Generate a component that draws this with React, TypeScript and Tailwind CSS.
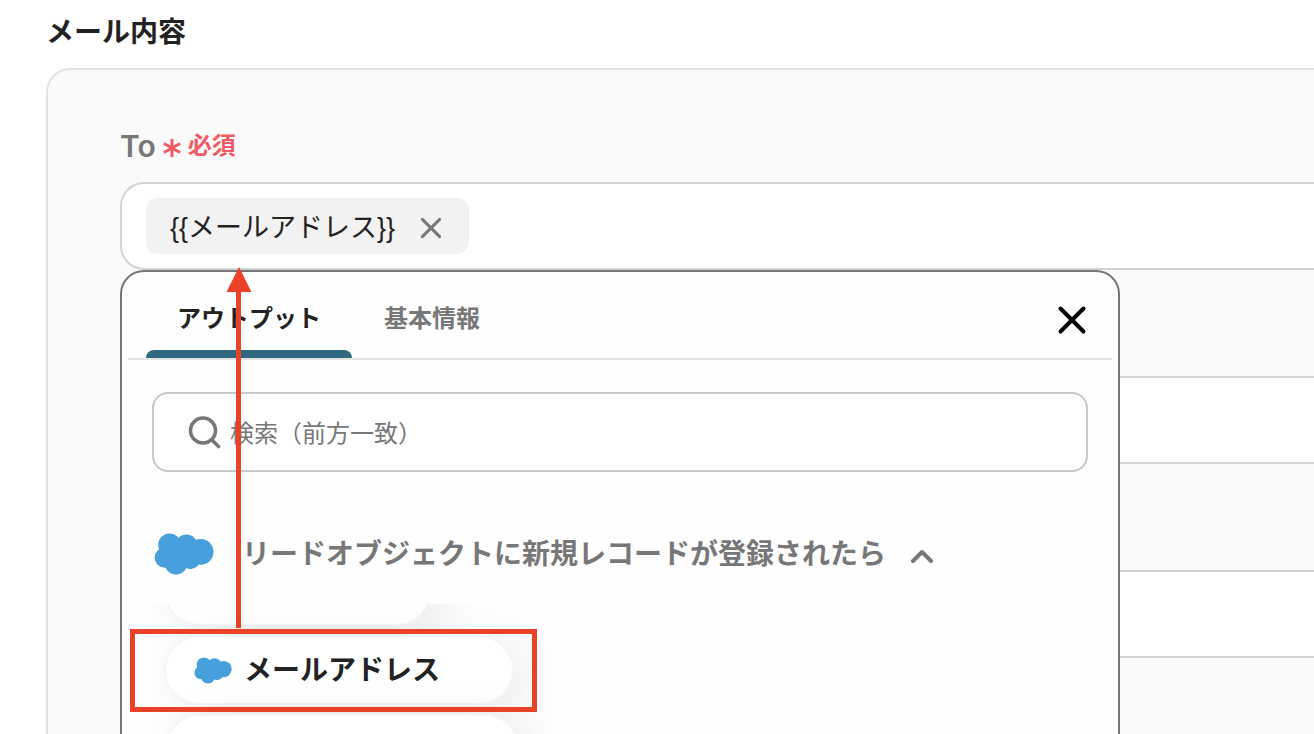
import type { ReactNode } from "react";

const fontStack = "font-['Inter','Noto_Sans_CJK_JP',sans-serif]";

function Cloud({ className }: { className: string }) {
  return (
    <svg viewBox="0 0 60 42" className={className} fill="#479fdb" aria-hidden="true">
      <circle cx="15.6" cy="11.8" r="11.4" />
      <circle cx="32.4" cy="12.6" r="11" />
      <circle cx="46.6" cy="18.8" r="12.9" />
      <circle cx="10.8" cy="24.6" r="10.2" />
      <circle cx="22" cy="30.4" r="11.2" />
      <circle cx="36.4" cy="26.4" r="9.8" />
      <path d="M14 8h10.500l12-1 4 24H12z" />
    </svg>
  );
}

function Cross({ className, width }: { className: string; width: number }) {
  return (
    <svg
      viewBox="0 0 32 32"
      className={className}
      fill="none"
      stroke="currentColor"
      strokeWidth={width}
      strokeLinecap="round"
      aria-hidden="true"
    >
      <path d="M4.5 4.5l23 23M27.5 4.5l-23 23" />
    </svg>
  );
}

function Pill({ width, children }: { width: string; children?: ReactNode }) {
  return (
    <button
      type="button"
      className={`flex h-[70px] shrink-0 items-center gap-3 rounded-full border-2 border-[#f5f5f5] bg-white pl-7 text-[28px] font-bold text-[#222] shadow-[12px_8px_48px_rgba(0,0,0,0.08)] ${width}`}
    >
      {children}
    </button>
  );
}

function OutputMenu() {
  return (
    <div className="absolute top-full -left-0.5 z-10 mt-0.5 h-screen w-[1000px] rounded-t-3xl border-2 border-[#757575] bg-[#fefefe]">
      <div className="mx-1.5 flex h-[88px] items-end border-b-2 border-[#e3e3e3] pl-[18px]">
        <div role="tablist" className="flex h-full">
          <button
            type="button"
            role="tab"
            aria-selected="true"
            className="relative px-[31px] pt-2 text-2xl font-bold text-[#222]"
          >
            アウトプット
            <span className="absolute inset-x-0 bottom-0 h-2 rounded-t-lg bg-[#2f6880]" />
          </button>
          <button
            type="button"
            role="tab"
            aria-selected="false"
            className="px-8 pt-2 text-2xl font-bold text-[#777]"
          >
            基本情報
          </button>
        </div>
        <button type="button" aria-label="閉じる" className="mr-6 mb-[22px] ml-auto text-black">
          <Cross className="size-8" width={4} />
        </button>
      </div>

      <label className="mx-[30px] mt-8 flex h-20 items-center gap-2 rounded-2xl border-2 border-[#c8c8c8] bg-white pl-[34px]">
        <svg
          viewBox="0 0 34 34"
          className="size-[34px]"
          fill="none"
          stroke="#777"
          strokeWidth="3.6"
          strokeLinecap="round"
          aria-hidden="true"
        >
          <circle cx="15" cy="15.5" r="12.5" />
          <path d="M24 25l6.500 6.500" />
        </svg>
        <input
          type="text"
          aria-label="検索"
          placeholder="検索（前方一致）"
          className="flex-1 bg-transparent pt-1 text-2xl text-[#222] outline-none placeholder:text-[#777]"
        />
      </label>

      <button
        type="button"
        className="mt-[60px] ml-8 flex h-11 items-center text-[28px] font-bold text-[#777]"
      >
        <Cloud className="mr-7 h-[42px] w-[60px]" />
        リードオブジェクトに新規レコードが登録されたら
        <svg
          viewBox="0 0 24 14"
          className="mt-1 ml-6 h-3.5 w-6"
          fill="none"
          stroke="currentColor"
          strokeWidth="4"
          strokeLinecap="round"
          strokeLinejoin="round"
          aria-hidden="true"
        >
          <path d="M3 12l9-9 9 9" />
        </svg>
      </button>

      {/* Scrolled list of outputs, cut at the top by the group header */}
      <div className="mt-7 flex h-40 flex-col justify-start overflow-hidden pl-[42px]">
        <div className="-mt-12 flex flex-col gap-[9px]">
          <Pill width="w-[268px]" />
          <Pill width="w-[350px]">
            <Cloud className="h-[27px] w-[38px]" />
            メールアドレス
          </Pill>
          <Pill width="w-[356px]" />
        </div>
      </div>
    </div>
  );
}

function Annotation() {
  return (
    <div className="pointer-events-none absolute top-[267px] left-[130px] z-20 flex flex-col">
      <svg viewBox="0 0 26 361" className="ml-24 h-[361px] w-[26px]" fill="#ea4226" aria-hidden="true">
        <path d="M13 0l12.5 25H.5z" />
        <path d="M10 24h5v337h-5z" />
      </svg>
      <div className="mt-px h-[83px] w-[407px] border-5 border-[#ea4226]" />
    </div>
  );
}

export default function App() {
  return (
    <main className={`relative h-screen overflow-hidden bg-white pl-[46px] ${fontStack}`}>
      <h1 className="pt-3 pb-4 text-[28px] leading-10 font-bold text-[#222]">メール内容</h1>

      <section className="h-screen rounded-tl-3xl border-t-2 border-l-2 border-[#e3e3e3] bg-[#fafafa] pt-14 pl-[72px]">
        <div className="mb-4 flex h-10 items-center gap-1.5 font-bold">
          <span className="text-[30px] font-semibold text-[#777]">To</span>
          <svg viewBox="0 0 20 20" className="mt-1 size-5" stroke="#f05a64" strokeWidth="3" aria-hidden="true">
            <path d="M10 1v18M2 5.5l16 9M18 5.5l-16 9" />
          </svg>
          <span className="text-2xl text-[#f05a64]">必須</span>
        </div>
        <div className="relative flex h-[88px] items-center rounded-l-3xl border-2 border-r-0 border-[#d0d4d8] bg-white pl-6">
          <div className="flex h-14 items-center gap-6 rounded-xl bg-[#f2f2f2] pt-1 pr-[26px] pl-6 font-['Liberation_Sans','Noto_Sans_CJK_JP',sans-serif] text-[27px] text-[#222]">
            {"{{メールアドレス}}"}
            <button type="button" aria-label="削除" className="text-[#777]">
              <Cross className="size-6" width={4} />
            </button>
          </div>
          <OutputMenu />
        </div>

        <input
          type="text"
          aria-label="Cc"
          className="mt-[106px] block h-[88px] w-full rounded-l-3xl border-2 border-r-0 border-[#d0d4d8] bg-white px-6"
        />
        <input
          type="text"
          aria-label="Bcc"
          className="mt-[106px] block h-[88px] w-full rounded-l-3xl border-2 border-r-0 border-[#d0d4d8] bg-white px-6"
        />
      </section>

      <Annotation />
    </main>
  );
}
